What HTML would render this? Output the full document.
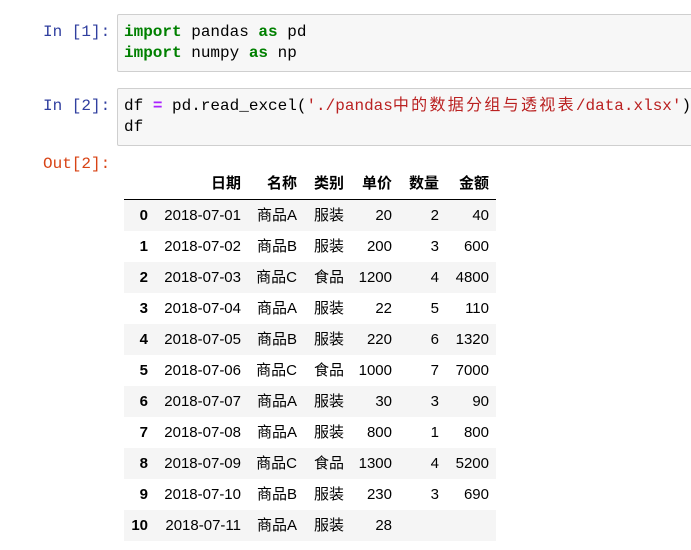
<!DOCTYPE html>
<html><head><meta charset="utf-8"><style>
body{margin:0;width:691px;height:550px;background:#fff;position:relative;overflow:hidden;font-family:"Liberation Sans","Noto Sans CJK SC",sans-serif}
.p{position:absolute;font-family:"Liberation Mono","Noto Sans CJK SC",monospace;font-size:16px;line-height:21px}
.in{color:#303f9f}.out{color:#d84315}
.box{position:absolute;left:117px;width:590px;background:#f7f7f7;border:1px solid #cfcfcf;border-radius:2px}
.code{position:absolute;left:124px;font-family:"Liberation Mono","Noto Sans CJK SC",monospace;font-size:16px;line-height:21px;color:#000;white-space:pre}
.k{color:#008000;font-weight:bold}.o{color:#aa22ff;font-weight:bold}.s{color:#ba2121}
.cj{letter-spacing:2.3px}
.row{position:absolute;left:124px;width:372px;height:31px}
.c{position:absolute;top:0;height:31px;line-height:31px;font-size:15px;color:#000;text-align:right;white-space:nowrap}
</style></head><body>
<div class="p in" style="left:43px;top:22px">In [1]:</div>
<div class="box" style="top:14px;height:56px"></div>
<div class="code" style="top:22px"><span class="k">import</span> pandas <span class="k">as</span> pd
<span class="k">import</span> numpy <span class="k">as</span> np</div>
<div class="p in" style="left:43px;top:96px">In [2]:</div>
<div class="box" style="top:88px;height:56px"></div>
<div class="code" style="top:96px">df <span class="o">=</span> pd.read_excel(<span class="s">'./pandas<span class="cj">中的数据分组与透视表</span>/data.xlsx'</span>)
df</div>
<div class="p out" style="left:43px;top:154px">Out[2]:</div>
<div id="t"></div>
<script>
var R=[148,241,297,344,392,439,489];
var data=[["","日期","名称","类别","单价","数量","金额"],
["0","2018-07-01","商品A","服装","20","2","40"],
["1","2018-07-02","商品B","服装","200","3","600"],
["2","2018-07-03","商品C","食品","1200","4","4800"],
["3","2018-07-04","商品A","服装","22","5","110"],
["4","2018-07-05","商品B","服装","220","6","1320"],
["5","2018-07-06","商品C","食品","1000","7","7000"],
["6","2018-07-07","商品A","服装","30","3","90"],
["7","2018-07-08","商品A","服装","800","1","800"],
["8","2018-07-09","商品C","食品","1300","4","5200"],
["9","2018-07-10","商品B","服装","230","3","690"],
["10","2018-07-11","商品A","服装","28","",""]];
var h="";
data.forEach(function(r,i){
 var top=i==0?168:200+(i-1)*31;
 var bg=(i>0&&i%2==1)?"background:#f5f5f5;":"";
 var bd=i==0?"border-bottom:1px solid #000;":"";
 h+='<div class="row" style="top:'+top+'px;'+bg+bd+'">';
 r.forEach(function(v,j){
  var w=(j==0||i==0)?'font-weight:bold;':'';
  h+='<div class="c" style="right:'+(496-R[j])+'px;'+w+'">'+v+'</div>';
 });
 h+='</div>';
});
document.getElementById('t').innerHTML=h;
</script>
</body></html>
